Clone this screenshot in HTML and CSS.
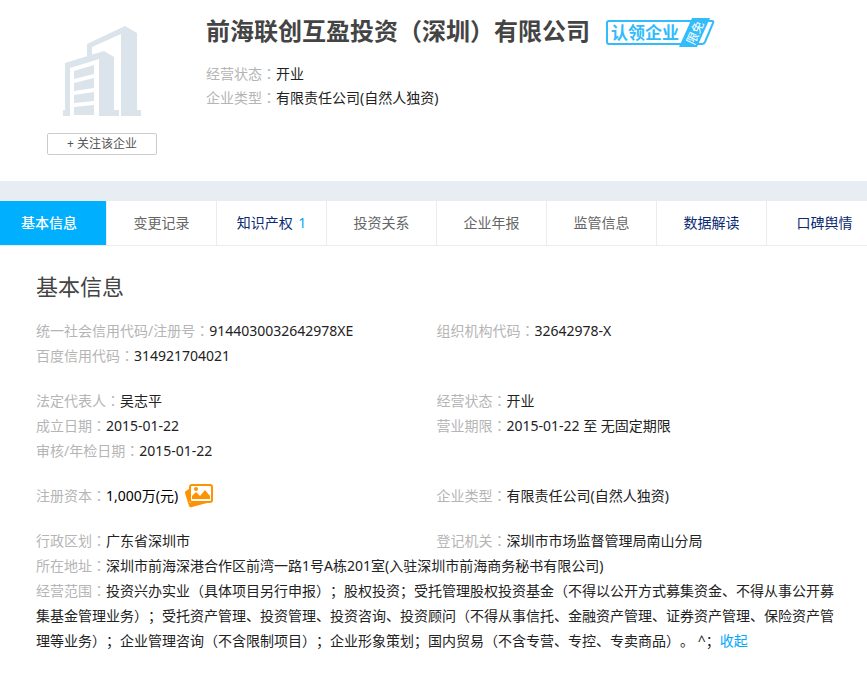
FILE: index.html
```html
<!DOCTYPE html>
<html lang="zh-CN">
<head>
<meta charset="utf-8">
<title>前海联创互盈投资（深圳）有限公司</title>
<link rel="stylesheet" href="styles.css">
</head>
<body>
<header class="company">
  <div class="side">
    <svg class="building" viewBox="0 0 78 90" aria-hidden="true">
      <path d="M24 31V18L62 0L74 7V84H78V90H58V8L29 21V29Z"/>
      <path d="M2 37L41 25L51 31V84H56V90H36V33L7 42V90H0V84H2Z"/>
      <path d="M11 45L31 39V48L11 53ZM11 57L31 52V62L11 65ZM11 69L31 66V75L11 77ZM11 81L31 79V89H11Z"/>
    </svg>
    <button class="follow" type="button">+ 关注该企业</button>
  </div>
  <div class="summary">
    <div class="title">
      <h1>前海联创互盈投资（深圳）有限公司</h1>
      <a class="claim" href="#" aria-label="认领企业 限免">
        <svg viewBox="0 0 110 30" aria-hidden="true">
          <path class="frame" d="M3 4H106Q108 4 107 6L99 25Q98 27 96 27H3Q1 27 1 25V6Q1 4 3 4Z"/>
          <path class="ribbon" d="M86 1H104L91 30H73Z"/>
          <text class="claim-text" x="5" y="22">认领企业</text>
          <text class="ribbon-text" transform="translate(88.500 15.500) rotate(-65)" y="5" text-anchor="middle">限免</text>
        </svg>
      </a>
    </div>
    <p><span class="label">经营状态<i lang="zh-TW">：</i></span>开业</p>
    <p><span class="label">企业类型<i lang="zh-TW">：</i></span>有限责任公司(自然人独资)</p>
  </div>
</header>
<nav class="tabs">
  <a class="active" href="#">基本信息</a>
  <a href="#">变更记录</a>
  <a class="linked" href="#">知识产权 <span class="count">1</span></a>
  <a href="#">投资关系</a>
  <a href="#">企业年报</a>
  <a href="#">监管信息</a>
  <a class="linked" href="#">数据解读</a>
  <a class="linked last" href="#">口碑舆情</a>
</nav>
<main class="details">
  <h2>基本信息</h2>
  <section class="group">
    <div>
      <p><span class="label">统一社会信用代码/注册号<i lang="zh-TW">：</i></span>9144030032642978XE</p>
      <p><span class="label">百度信用代码<i lang="zh-TW">：</i></span>314921704021</p>
    </div>
    <div>
      <p><span class="label">组织机构代码<i lang="zh-TW">：</i></span>32642978-X</p>
    </div>
  </section>
  <section class="group">
    <div>
      <p><span class="label">法定代表人<i lang="zh-TW">：</i></span>吴志平</p>
      <p><span class="label">成立日期<i lang="zh-TW">：</i></span>2015-01-22</p>
      <p><span class="label">审核/年检日期<i lang="zh-TW">：</i></span>2015-01-22</p>
    </div>
    <div>
      <p><span class="label">经营状态<i lang="zh-TW">：</i></span>开业</p>
      <p><span class="label">营业期限<i lang="zh-TW">：</i></span>2015-01-22 至 无固定期限</p>
    </div>
  </section>
  <section class="group">
    <p class="capital"><span class="label">注册资本<i lang="zh-TW">：</i></span>1,000万(元)
      <svg class="photo" viewBox="0 0 28 24" aria-hidden="true">
        <path class="solid" d="M1 7L4 5V17Q4 19 6 19H22L7 23Q5 24 4 22L0 9Q0 7 1 7Z"/>
        <rect class="outline" x="5" y="1" width="22" height="17" rx="2"/>
        <path class="solid" d="M7 15V12L11 8L15 12L20 6L25 12V15Z"/>
        <circle class="solid" cx="11" cy="5" r="2"/>
      </svg>
    </p>
    <p><span class="label">企业类型<i lang="zh-TW">：</i></span>有限责任公司(自然人独资)</p>
  </section>
  <section class="group">
    <p><span class="label">行政区划<i lang="zh-TW">：</i></span>广东省深圳市</p>
    <p><span class="label">登记机关<i lang="zh-TW">：</i></span>深圳市市场监督管理局南山分局</p>
    <p class="wide"><span class="label">所在地址<i lang="zh-TW">：</i></span>深圳市前海深港合作区前湾一路1号A栋201室(入驻深圳市前海商务秘书有限公司)</p>
    <p class="wide"><span class="label">经营范围<i lang="zh-TW">：</i></span>投资兴办实业（具体项目另行申报）；股权投资；受托管理股权投资基金（不得以公开方式募集资金、不得从事公开募集基金管理业务）；受托资产管理、投资管理、投资咨询、投资顾问（不得从事信托、金融资产管理、证券资产管理、保险资产管理等业务）；企业管理咨询（不含限制项目）；企业形象策划；国内贸易（不含专营、专控、专卖商品）。 ^；<a class="collapse" href="#">收起</a></p>
  </section>
</main>
</body>
</html>
```
FILE: styles.css
```css
* {
  box-sizing: border-box;
}

body {
  margin: 0;
  overflow-x: hidden;
  background: #fff;
  color: #222;
  font: 14px/25px "Noto Sans", "Noto Sans CJK SC", sans-serif;
  text-spacing-trim: space-all;
}

h1, h2, p {
  margin: 0;
}

a {
  text-decoration: none;
}

/* Centred full-width punctuation */
i {
  font-family: "Noto Sans CJK TC", sans-serif;
  font-style: normal;
  line-height: 1;
}

.label {
  color: #b5b5b5;
}

.company {
  display: flex;
  height: 181px;
}

.side {
  display: flex;
  flex-direction: column;
  align-items: center;
  gap: 17px;
  width: 206px;
  padding: 26px 2px 0 0;
}

.building {
  width: 78px;
  height: 90px;
  fill: #dbe3eb;
}

.follow {
  width: 110px;
  height: 22px;
  padding: 0;
  border: 1px solid #ccc;
  border-radius: 2px;
  background: #fff;
  color: #555;
  font: 12px/20px "Noto Sans", "Noto Sans CJK SC", sans-serif;
}

.summary {
  padding-top: 14px;
  line-height: 24px;
}

.title {
  display: flex;
  align-items: center;
  gap: 16px;
  height: 36px;
  margin-bottom: 12px;
}

h1 {
  padding-bottom: 2px;
  color: #444;
  font-size: 24px;
  line-height: 34px;
  font-weight: 700;
}

.claim svg {
  display: block;
  width: 110px;
  height: 30px;
}

.frame {
  fill: #fff;
  stroke: #32bcfb;
  stroke-width: 2;
}

.ribbon {
  fill: #32bcfb;
}

.claim-text {
  fill: #32bcfb;
  font-size: 17px;
  font-weight: 700;
}

.ribbon-text {
  fill: #fff;
  font-size: 12px;
}

.tabs {
  display: flex;
  border-top: 20px solid #e8edf4;
  border-bottom: 1px solid #e8edf4;
}

.tabs a {
  flex: 0 0 110px;
  border-right: 1px solid #e8edf4;
  color: #666;
  line-height: 44px;
  text-align: center;
}

.tabs .active {
  flex-basis: 107px;
  padding-right: 8px;
  background: #00b0ff;
  background-clip: padding-box;
  color: #fff;
  font-weight: 500;
}

.tabs .linked {
  color: #0a2a72;
}

.tabs .last {
  flex-basis: 116px;
}

.tabs .count {
  margin-left: 2px;
  color: #00a8f3;
}

.details {
  padding: 20px 30px 30px 36px;
}

h2 {
  margin-bottom: 12px;
  color: #444;
  font-size: 22px;
  font-weight: 400;
  line-height: 40px;
}

.group {
  display: grid;
  grid-template-columns: 1fr 1fr;
  margin-bottom: 20px;
}

.wide {
  grid-column: 1 / -1;
}

.capital {
  display: flex;
  align-items: center;
  color: #000;
}

.photo {
  width: 28px;
  height: 24px;
  margin-left: 7px;
}

.solid {
  fill: #ff9200;
}

.outline {
  fill: #fff;
  stroke: #ff9200;
  stroke-width: 2;
}

.collapse {
  color: #00a8ff;
}
```
